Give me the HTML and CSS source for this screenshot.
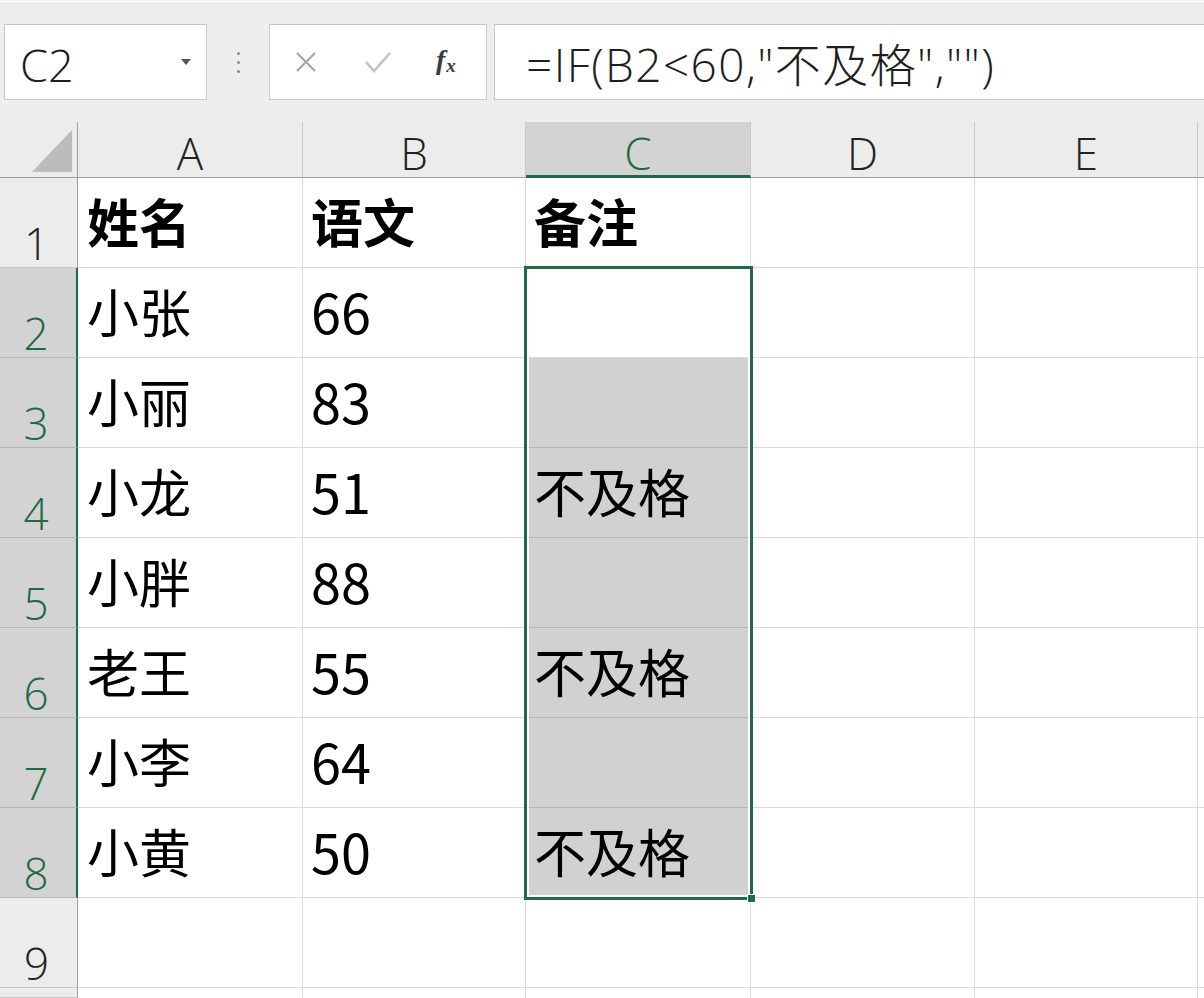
FILE: index.html
```html
<!DOCTYPE html>
<html lang="zh-CN">
<head>
<meta charset="utf-8">
<title>Excel</title>
<link rel="stylesheet" href="styles.css">
</head>
<body>
<div class="topbar">
  <div class="namebox"><span class="ref">C2</span><span class="caret"></span></div>
  <div class="dots"><i></i><i></i><i></i></div>
  <div class="btnbox">
    <svg class="ico-x" width="24" height="24" viewBox="0 0 24 24"><path d="M3 3 L21 21 M21 3 L3 21" stroke="#a3a3a3" stroke-width="2" fill="none"/></svg>
    <svg class="ico-ok" width="28" height="24" viewBox="0 0 28 24"><path d="M2 12 L10 21 L26 3" stroke="#c2c2c2" stroke-width="2.6" fill="none"/></svg>
    <span class="fx"><i>f</i><span class="sx">x</span></span>
  </div>
  <div class="formula">=IF(B2&lt;60,"不及格","")</div>
</div>

<div class="sheet">
  <div class="corner"><span class="tri"></span></div>
  <div class="ch">A</div>
  <div class="ch">B</div>
  <div class="ch sel">C</div>
  <div class="ch">D</div>
  <div class="ch">E</div>
  <div class="ch end"></div>

  <div class="rh">1</div>
  <div class="cell ca b">姓名</div>
  <div class="cell cb b">语文</div>
  <div class="cell cc b">备注</div>
  <div class="cell"></div><div class="cell"></div><div class="cell end"></div>

  <div class="rh sel">2</div>
  <div class="cell ca">小张</div>
  <div class="cell cb num">66</div>
  <div class="cell cc"></div>
  <div class="cell"></div><div class="cell"></div><div class="cell end"></div>

  <div class="rh sel">3</div>
  <div class="cell ca">小丽</div>
  <div class="cell cb num">83</div>
  <div class="cell cc hl"></div>
  <div class="cell"></div><div class="cell"></div><div class="cell end"></div>

  <div class="rh sel">4</div>
  <div class="cell ca">小龙</div>
  <div class="cell cb num">51</div>
  <div class="cell cc hl">不及格</div>
  <div class="cell"></div><div class="cell"></div><div class="cell end"></div>

  <div class="rh sel">5</div>
  <div class="cell ca">小胖</div>
  <div class="cell cb num">88</div>
  <div class="cell cc hl"></div>
  <div class="cell"></div><div class="cell"></div><div class="cell end"></div>

  <div class="rh sel">6</div>
  <div class="cell ca">老王</div>
  <div class="cell cb num">55</div>
  <div class="cell cc hl">不及格</div>
  <div class="cell"></div><div class="cell"></div><div class="cell end"></div>

  <div class="rh sel">7</div>
  <div class="cell ca">小李</div>
  <div class="cell cb num">64</div>
  <div class="cell cc hl"></div>
  <div class="cell"></div><div class="cell"></div><div class="cell end"></div>

  <div class="rh sel">8</div>
  <div class="cell ca">小黄</div>
  <div class="cell cb num">50</div>
  <div class="cell cc hl">不及格</div>
  <div class="cell"></div><div class="cell"></div><div class="cell end"></div>

  <div class="rh">9</div>
  <div class="cell"></div><div class="cell"></div><div class="cell"></div>
  <div class="cell"></div><div class="cell"></div><div class="cell end"></div>

  <div class="rh"></div>
  <div class="cell"></div><div class="cell"></div><div class="cell"></div>
  <div class="cell"></div><div class="cell"></div><div class="cell end"></div>

  <div class="selection"><span class="handle"></span></div>
</div>
</body>
</html>
```

FILE: styles.css
```css
* { box-sizing: border-box; margin: 0; padding: 0; }

body {
  margin: 0;
  width: 1204px;
  height: 998px;
  overflow: hidden;
  background: #eeeeee;
  font-family: "Open Sans", "Noto Sans CJK SC", sans-serif;
  color: #222;
}

/* ---------- formula bar ---------- */
.topbar {
  display: flex;
  align-items: flex-start;
  height: 122px;
  padding-top: 24px;
  background: linear-gradient(#f8f8f8 0, #f8f8f8 3px, #e4e4e4 3px, #e4e4e4 4px, #eeeeee 4px);
}

.namebox {
  margin-left: 4px;
  width: 203px;
  height: 76px;
  background: #fff;
  border: 1px solid #c9c9c9;
  display: flex;
  align-items: flex-start;
  padding: 18px 15px 0 15px;
}

.ref {
  font-size: 45px;
  line-height: 44px;
  font-weight: 300;
  color: #1e1e1e;
}

.caret {
  margin-left: auto;
  align-self: center;
  margin-top: -18px;
  width: 0;
  height: 0;
  border-left: 5px solid transparent;
  border-right: 5px solid transparent;
  border-top: 6px solid #555;
}

.dots {
  width: 62px;
  height: 76px;
  display: flex;
  flex-direction: column;
  align-items: center;
  justify-content: center;
  gap: 6px;
}

.dots i {
  display: block;
  width: 3px;
  height: 3px;
  border-radius: 50%;
  background: #8a8a8a;
}

.btnbox {
  width: 218px;
  height: 76px;
  background: #fff;
  border: 1px solid #c9c9c9;
  display: flex;
  align-items: center;
  padding-left: 24px;
}

.ico-ok { margin-left: 46px; }

.fx {
  margin-left: 44px;
  font-family: "Liberation Serif", serif;
  font-weight: 700;
  font-size: 28px;
  color: #3c3c3c;
  line-height: 1;
  margin-top: -4px;
}

.fx i { font-style: italic; }

.fx .sx {
  font-style: italic;
  font-size: 19px;
  position: relative;
  top: 3px;
  margin-left: 1px;
}

.formula {
  margin-left: 7px;
  flex: 1;
  height: 76px;
  background: #fff;
  border: 1px solid #c9c9c9;
  border-right: none;
  padding: 17px 0 0 31px;
  font-size: 46px;
  line-height: 44px;
  font-weight: 300;
  letter-spacing: 1.4px;
  color: #1e1e1e;
  white-space: nowrap;
}

/* ---------- grid ---------- */
.sheet {
  position: relative;
  display: grid;
  grid-template-columns: 78px 225px 223px 225px 224px 223px 6px;
  grid-template-rows: 56px repeat(9, 90px) 10px;
  background: #fff;
}

.corner {
  background: #ececec;
  border-right: 1px solid #a0a0a0;
  border-bottom: 1px solid #a0a0a0;
  display: flex;
  justify-content: flex-end;
  align-items: flex-end;
  padding: 0 5px 5px 0;
}

.tri {
  width: 0;
  height: 0;
  border-left: 40px solid transparent;
  border-bottom: 42px solid #bcbcbc;
}

.ch {
  background: #ececec;
  border-right: 1px solid #c8c8c8;
  border-bottom: 1px solid #a0a0a0;
  display: flex;
  justify-content: center;
  align-items: flex-end;
  padding-bottom: 2px;
  font-size: 44px;
  line-height: 44px;
  font-weight: 300;
  color: #222;
}

.ch.end { border-right: none; }

.ch.sel {
  background: #d3d3d3;
  color: #1d6b40;
  border-bottom: 3px solid #1d6b40;
  padding-bottom: 0;
}

.rh {
  background: #ececec;
  border-right: 1px solid #a0a0a0;
  border-bottom: 1px solid #c8c8c8;
  display: flex;
  justify-content: center;
  align-items: flex-end;
  padding: 0 4px 2px 0;
  font-size: 44px;
  line-height: 44px;
  font-weight: 300;
  color: #222;
}

.rh.sel {
  background: #d3d3d3;
  color: #1d6b40;
  border-right: 2px solid #1d6b40;
  border-bottom-color: #b5b5b5;
}

.cell {
  background: #fff;
  border-right: 1px solid #dadada;
  border-bottom: 1px solid #dadada;
  display: flex;
  align-items: flex-end;
  padding: 0 0 21px 8px;
  font-family: "Noto Sans CJK SC", sans-serif;
  font-size: 52px;
  line-height: 50px;
  color: #000;
  white-space: nowrap;
}

.cell.end { border-right: none; }
.cell.ca { padding-left: 9px; }
.cell.cb { padding-left: 8px; }
.cell.cc { padding-left: 8px; }
.cell.b { font-weight: 700; }
.cell.num { font-size: 54px; }

.cell.hl {
  background: #d1d1d1;
  border-bottom-color: #b3b3b3;
}

.selection {
  position: absolute;
  left: 524px;
  top: 144px;
  width: 229px;
  height: 634px;
  border: 3px solid #1f6b43;
  box-shadow: inset 0 0 0 2px #fff;
  pointer-events: none;
}

.handle {
  position: absolute;
  right: -6px;
  bottom: -6px;
  width: 9px;
  height: 9px;
  background: #1f6b43;
  border: 1px solid #fff;
}
```
